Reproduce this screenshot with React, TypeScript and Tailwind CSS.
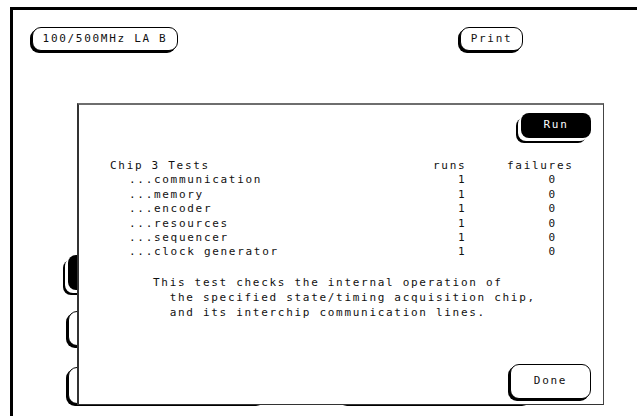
import type { ReactNode } from 'react';

function SoftKey({ className = '', children }: { className?: string; children?: ReactNode }) {
  return (
    <div
      className={`flex items-center justify-center rounded-[9px] border border-black bg-white shadow-[-2px_2px_0_0_#000] ${className}`}
    >
      {children}
    </div>
  );
}

function DarkKey({ className = '', children }: { className?: string; children?: ReactNode }) {
  return (
    <div
      className={`flex items-center justify-center rounded-[8px] bg-black text-white shadow-[-3px_3px_0_0_#fff,-5px_5px_0_0_#000] ${className}`}
    >
      {children}
    </div>
  );
}

const tests = ['communication', 'memory', 'encoder', 'resources', 'sequencer', 'clock generator'];

export default function App() {
  return (
    <div className="relative h-[416px] w-[637px] overflow-hidden bg-white font-['DejaVu_Sans_Mono',monospace] text-[11px] tracking-[1.7px] text-[#111]">
      {/* screen frame */}
      <div className="ml-[10px] mt-[7px] h-[409px] border-l-[3px] border-t-[3px] border-black">
        <div className="flex pl-[19px] pt-[17px]">
          <SoftKey className="h-[24px] w-[146px]">100/500MHz LA B</SoftKey>
          <SoftKey className="ml-[282px] h-[24px] w-[63px]">Print</SoftKey>
        </div>

        {/* keys behind the dialog */}
        <div className="mt-[204px] flex flex-col gap-[21px] pl-[55px]">
          <DarkKey className="h-[35px] w-[200px]" />
          <SoftKey className="h-[35px] w-[200px]" />
          <div className="flex gap-[73px]">
            <SoftKey className="h-[37px] w-[199px]" />
            <SoftKey className="h-[37px] w-[193px]" />
          </div>
        </div>
      </div>

      {/* test dialog */}
      <div className="absolute left-[77px] top-[103px] flex h-[302px] w-[527px] flex-col border-b border-l-2 border-r border-t-2 border-b-[#333] border-l-[#333] border-r-[#444] border-t-[#6e6e6e] bg-white">
        <div className="flex justify-end pr-[12px] pt-[8px]">
          <DarkKey className="h-[25px] w-[70px]">Run</DarkKey>
        </div>

        <div className="mt-[21px] pl-[31px] leading-[14.4px]">
          <div className="flex">
            <span className="w-[323px]">Chip 3 Tests</span>
            <span className="w-[74px]">runs</span>
            <span>failures</span>
          </div>
          {tests.map((t) => (
            <div key={t} className="flex whitespace-pre">
              <span className="w-[323px] pl-[19px]">...{t}</span>
              <span className="w-[74px]">{'   1'}</span>
              <span>{'     0'}</span>
            </div>
          ))}

          <div className="ml-[43px] mt-[15px] whitespace-pre leading-[15px]">
            <div>This test checks the internal operation of</div>
            <div>{'  the specified state/timing acquisition chip,'}</div>
            <div>{'  and its interchip communication lines.'}</div>
          </div>
        </div>

        <div className="mt-auto flex justify-end pb-[5px] pr-[12px]">
          <SoftKey className="h-[35px] w-[81px]">Done</SoftKey>
        </div>
      </div>
    </div>
  );
}
